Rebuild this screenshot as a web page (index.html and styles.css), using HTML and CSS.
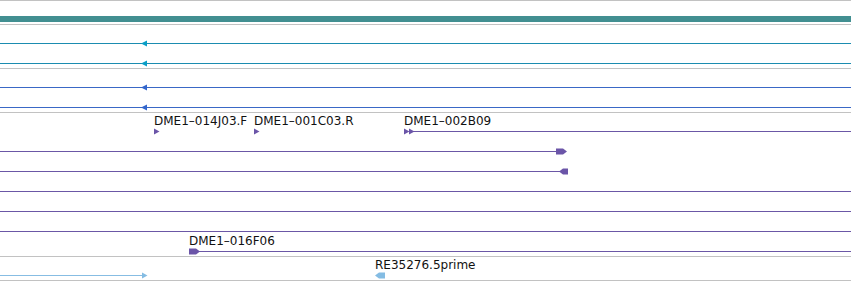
FILE: index.html
```html
<!DOCTYPE html>
<html>
<head>
<meta charset="utf-8">
<title>Tracks</title>
<link rel="stylesheet" href="styles.css">
</head>
<body>
<div class="browser">
  <section class="track track-ref">
    <div class="ref-bar"></div>
  </section>

  <section class="track">
    <div class="row">
      <div class="line teal" style="left:0;width:851px"></div>
      <svg class="arrow" style="left:141px" width="7" height="7" viewBox="0 0 7 7"><polygon class="fill-teal-a" points="0,3.5 6,0.5 6,6.5"/></svg>
    </div>
    <div class="row">
      <div class="line teal" style="left:0;width:851px"></div>
      <svg class="arrow" style="left:141px" width="7" height="7" viewBox="0 0 7 7"><polygon class="fill-teal-a" points="0,3.5 6,0.5 6,6.5"/></svg>
    </div>
  </section>

  <section class="track">
    <div class="row">
      <div class="line blue" style="left:0;width:851px"></div>
      <svg class="arrow" style="left:141px" width="7" height="7" viewBox="0 0 7 7"><polygon class="fill-blue" points="0,3.5 6,0.5 6,6.5"/></svg>
    </div>
    <div class="row">
      <div class="line blue" style="left:0;width:851px"></div>
      <svg class="arrow" style="left:141px" width="7" height="7" viewBox="0 0 7 7"><polygon class="fill-blue" points="0,3.5 6,0.5 6,6.5"/></svg>
    </div>
  </section>

  <section class="track">
    <div class="row">
      <span class="label" style="left:154px">DME1–014J03.F</span>
      <svg class="arrow" style="left:154px" width="6" height="7" viewBox="0 0 6 7"><polygon class="fill-purple" points="0,0.5 5.5,3.5 0,6.5"/></svg>
      <span class="label" style="left:254px">DME1–001C03.R</span>
      <svg class="arrow" style="left:254px" width="6" height="7" viewBox="0 0 6 7"><polygon class="fill-purple" points="0,0.5 5.5,3.5 0,6.5"/></svg>
      <span class="label" style="left:404px">DME1–002B09</span>
      <div class="line purple" style="left:410px;width:441px"></div>
      <svg class="arrow" style="left:404px" width="11" height="7" viewBox="0 0 11 7"><polygon class="fill-purple" points="0,0.5 5.5,3.5 0,6.5"/><polygon class="fill-purple" points="5,0.5 10.5,3.5 5,6.5"/></svg>
    </div>
    <div class="row">
      <div class="line purple" style="left:0;width:557px"></div>
      <svg class="arrow" style="left:556px" width="11" height="7" viewBox="0 0 11 7"><polygon class="fill-purple" points="0,0.5 7,0.5 11,3.5 7,6.5 0,6.5"/></svg>
    </div>
    <div class="row">
      <div class="line purple" style="left:0;width:560px"></div>
      <svg class="arrow" style="left:559px" width="9" height="7" viewBox="0 0 9 7"><polygon class="fill-purple" points="0,3.5 4,0.5 9,0.5 9,6.5 4,6.5"/></svg>
    </div>
    <div class="row">
      <div class="line purple" style="left:0;width:851px"></div>
    </div>
    <div class="row">
      <div class="line purple" style="left:0;width:851px"></div>
    </div>
    <div class="row">
      <div class="line purple" style="left:0;width:851px"></div>
    </div>
    <div class="row">
      <span class="label" style="left:189px">DME1–016F06</span>
      <div class="line purple" style="left:196px;width:655px"></div>
      <svg class="arrow" style="left:189px" width="11" height="7" viewBox="0 0 11 7"><polygon class="fill-purple" points="0,0.5 7,0.5 11,3.5 7,6.5 0,6.5"/></svg>
    </div>
  </section>

  <section class="track track-last">
    <div class="row">
      <div class="line lightblue" style="left:0;width:144px"></div>
      <svg class="arrow" style="left:142px" width="6" height="7" viewBox="0 0 6 7"><polygon class="fill-lightblue" points="0,0.5 5.5,3.5 0,6.5"/></svg>
      <span class="label" style="left:375px">RE35276.5prime</span>
      <svg class="arrow" style="left:375px" width="10" height="7" viewBox="0 0 10 7"><polygon class="fill-lightblue" points="0,3.5 4,0.5 10,0.5 10,6.5 4,6.5"/></svg>
    </div>
  </section>
</div>
</body>
</html>
```

FILE: styles.css
```css
html, body {
  margin: 0;
  padding: 0;
  background: #ffffff;
}

.browser {
  width: 851px;
  overflow: hidden;
  font-family: "DejaVu Sans", sans-serif;
}

.track {
  border-top: 1px solid #c2c2c2;
  padding-bottom: 3px;
}

.track-last {
  border-bottom: 1px solid #c2c2c2;
}

.track-ref {
  height: 24px;
  padding-bottom: 0;
  box-sizing: border-box;
  padding-top: 15px;
}

.ref-bar {
  height: 6px;
  background: #428f91;
}

.row {
  position: relative;
  height: 20px;
}

.line {
  position: absolute;
  top: 18px;
  height: 1px;
}

.line.teal { background: #1b8cb0; }
.line.blue { background: #3a68c6; }
.line.purple { background: #6b57a6; }
.line.lightblue { background: #87bde3; }

.arrow {
  position: absolute;
  top: 15px;
  display: block;
}

.fill-teal-a { fill: #0a9ec6; }
.fill-blue { fill: #3366cc; }
.fill-purple { fill: #6b55a8; }
.fill-lightblue { fill: #84bce3; }

.label {
  position: absolute;
  top: 1px;
  font-size: 12px;
  line-height: 14px;
  color: #111111;
  white-space: nowrap;
}
```
